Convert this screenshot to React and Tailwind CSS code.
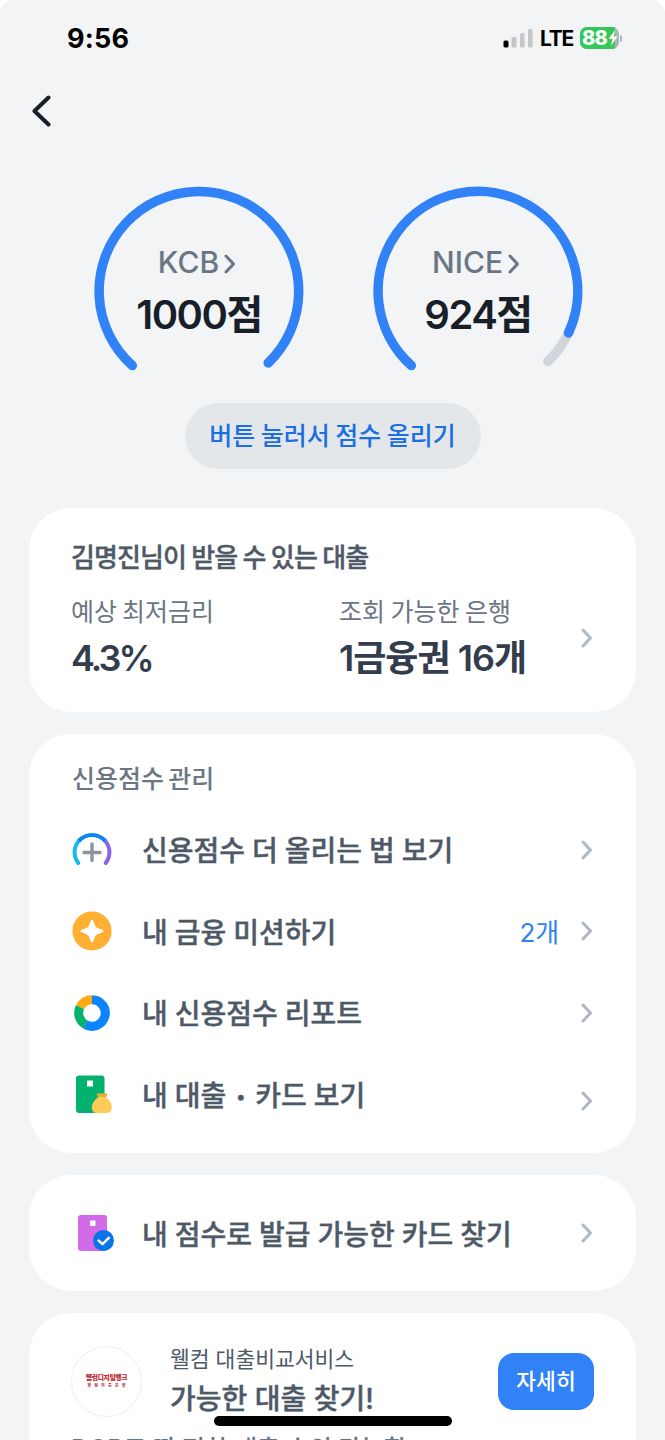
import React from 'react';

const ChevronRight = ({ className }) => (
  <svg viewBox="0 0 12 20" fill="none" stroke="currentColor" strokeLinecap="round" strokeLinejoin="round" className={className}>
    <path d="M2 2l7.5 8L2 18" strokeWidth="3" />
  </svg>
);

const StatusBar = () => (
  <div className="flex h-[76px] items-center justify-between pl-[67px] pr-[43px] text-black">
    <span className="text-[27px] font-bold leading-none tracking-[0.2px]">9:56</span>
    <div className="flex items-center">
      <svg viewBox="0 0 32 20" className="h-5 w-8">
        <rect x="0.5" y="12.5" width="5" height="7" rx="1.5" fill="#000" />
        <rect x="8.5" y="9" width="5" height="10.5" rx="1.5" fill="#c5c6c8" />
        <rect x="17" y="5" width="4.5" height="14.5" rx="1.5" fill="#c5c6c8" />
        <rect x="25" y="1" width="4.5" height="18.5" rx="1.5" fill="#c5c6c8" />
      </svg>
      <span className="ml-[5px] mr-px w-[33px] text-[21px] font-bold leading-none tracking-[-1.2px]">LTE</span>
      <div className="relative ml-1.5 flex h-[22px] w-[39px] items-center overflow-hidden rounded-[7px] bg-[#b1b2b5]">
        <div className="h-full w-[35px] bg-[#34c759]" />
        <span className="absolute left-[2px] text-[20px] font-extrabold leading-none tracking-[-0.8px] text-white">88</span>
        <svg viewBox="0 0 10 16" className="absolute left-[28px] top-[3px] h-4 w-2.5">
          <path d="M7 0L0.5 9H4.5L3 16L9.5 6.5H5.8Z" fill="#fff" />
        </svg>
      </div>
      <div className="ml-px h-[7px] w-[2px] rounded-r-full bg-[#b1b2b5]" />
    </div>
  </div>
);

const ScoreGauge = ({ label, score, children }) => (
  <div className="relative h-[210px] w-[210px]">
    <svg viewBox="0 0 210 210" fill="none" strokeWidth="9.5" strokeLinecap="round" className="absolute inset-0 h-full w-full">
      {children}
    </svg>
    <div className="relative flex flex-col items-center pt-[58px]">
      <div className="mr-1 flex h-9 items-center text-[#6b7684]">
        <span className="text-[30px] font-medium leading-none">{label}</span>
        <ChevronRight className="ml-[5px] mt-1 h-5 w-3" />
      </div>
      <div className="mt-[9px] h-[52px] text-[40px] font-semibold leading-[52px] tracking-[-1.5px] text-[#191f28]">{score}</div>
    </div>
  </div>
);

const MethodIcon = () => (
  <svg viewBox="0 0 40 40" fill="none" strokeWidth="4" strokeLinecap="round" className="h-10 w-10">
    <path d="M6.3 33A17.3 17.3 0 0 1 7.5 10.2" stroke="#15b9ee" />
    <path d="M32.5 10.2A17.3 17.3 0 0 1 33.7 33" stroke="#8b63ea" />
    <path d="M6.9 10.9A17.3 17.3 0 0 1 33.1 10.9" stroke="#0a86f2" strokeLinecap="butt" />
    <path d="M20 14V30.5M12 22.5H28" stroke="#8b95a1" strokeWidth="3.4" />
  </svg>
);

const MissionIcon = () => (
  <svg viewBox="0 0 40 40" className="h-10 w-10">
    <circle cx="20" cy="20" r="19.6" fill="#ffaf32" />
    <path d="M20 8.5Q21 8.5 21.5 10.2C23.3 16 24 16.7 29.8 18.5Q31.5 19 31.5 20T29.8 21.5C24 23.3 23.3 24 21.5 29.8Q21 31.5 20 31.5T18.5 29.8C16.7 24 16 23.3 10.2 21.5Q8.5 21 8.5 20T10.2 18.5C16 16.7 16.7 16 18.5 10.2Q19 8.5 20 8.5Z" fill="#fff" />
  </svg>
);

const ReportIcon = () => (
  <svg viewBox="0 0 40 40" fill="none" strokeWidth="9" className="h-10 w-10">
    <path d="M20 6.7A13.3 13.3 0 1 1 13.35 31.52" stroke="#0a84ff" />
    <path d="M13.35 31.52A13.3 13.3 0 0 1 8.15 13.96" stroke="#03b26c" />
    <path d="M8.15 13.96A13.3 13.3 0 0 1 20 6.7" stroke="#ffab0f" />
  </svg>
);

const LoanIcon = () => (
  <svg viewBox="0 0 40 40" className="h-10 w-10">
    <rect x="4" y="1.5" width="28.5" height="37.5" rx="3" fill="#03b26c" />
    <rect x="15" y="6.5" width="6" height="6" rx="0.5" fill="#fff" />
    <path d="M24.5 19.5H35.5L33.5 25H27Z" fill="#ebac2f" />
    <path d="M26.5 23H33.5C37 25.5 39.8 29 39.8 33.5Q39.5 39 34.5 39H25Q20 39 19.8 33.5C20 29 23 25.5 26.5 23Z" fill="#ffcb58" />
  </svg>
);

const CardCheckIcon = () => (
  <svg viewBox="0 0 40 40" className="h-10 w-10 overflow-visible">
    <rect x="6" y="2" width="29" height="36" rx="3" fill="#d36be8" />
    <rect x="18" y="7.5" width="5.5" height="5.5" rx="0.5" fill="#fff" />
    <circle cx="31.5" cy="27.5" r="10.5" fill="#0a75e8" />
    <path d="M26.5 27.5L30.5 31.2L36.8 24.8" fill="none" stroke="#fff" strokeWidth="2.4" strokeLinecap="round" strokeLinejoin="round" />
  </svg>
);

const menuItems = [
  { icon: MethodIcon, label: '신용점수 더 올리는 법 보기' },
  { icon: MissionIcon, label: '내 금융 미션하기', count: '2개' },
  { icon: ReportIcon, label: '내 신용점수 리포트' },
  { icon: LoanIcon, label: '내 대출 • 카드 보기', chevronClass: 'mt-[14px]' },
];

const MenuRow = ({ icon: Icon, label, count, chevronClass = '' }) => (
  <div className="flex h-[81.5px] items-center">
    <Icon />
    <span className="ml-[30px] mt-[3px] flex-1 text-[28px] font-medium leading-10 text-[#4e5968] [-webkit-text-stroke:0.4px] [word-spacing:-0.5px]">
      {label.split('•').map((part, i) => (
        <React.Fragment key={part}>
          {i > 0 && <span className="inline-block w-[15px] text-center text-[18px] leading-none [vertical-align:3px]">•</span>}
          {part}
        </React.Fragment>
      ))}
    </span>
    {count && <span className="mr-[22px] mt-[3px] text-[26px] leading-10 tracking-[-0.2px] text-[#3182f6]">{count}</span>}
    <ChevronRight className={`mr-px h-5 w-3 text-[#b0b8c1] ${chevronClass}`} />
  </div>
);

const App = () => {
  return (
    <div className="h-[1440px] w-[665px] overflow-hidden bg-white font-['Inter','Noto_Sans_CJK_KR',sans-serif]">
      <div className="relative h-full overflow-hidden rounded-t-[14px] bg-[#f2f4f6]">
        <StatusBar />

        <div className="flex h-[110px] items-start pl-8 pt-[19px]">
          <svg viewBox="0 0 20 32" fill="none" className="h-8 w-5">
            <path d="M16.5 2.5L2.5 16L16.5 29.5" stroke="#191f28" strokeWidth="4" strokeLinecap="round" strokeLinejoin="round" />
          </svg>
        </div>

        {/* Scores */}
        <div className="flex gap-[69px] pl-[94px]">
          <ScoreGauge label="KCB" score="1000점">
            <path d="M38.3 179.5A99.8 99.8 0 1 1 174.2 177" stroke="#3182f6" />
          </ScoreGauge>
          <ScoreGauge label="NICE" score="924점">
            <path d="M195.5 147A99.8 99.8 0 0 1 174.8 175.5" stroke="#d1d6db" />
            <path d="M38.3 179.5A99.8 99.8 0 1 1 195.5 147" stroke="#3182f6" />
          </ScoreGauge>
        </div>

        <div className="mt-[7px] flex justify-center">
          <button className="h-[66px] w-[296px] rounded-full bg-[#e4e7ea] pt-[2px] text-[25px] font-medium text-[#1b6fe0] [word-spacing:-1.2px]">
            버튼 눌러서 점수 올리기
          </button>
        </div>

        <main className="mt-[39px] flex flex-col gap-[22px] px-[29px]">
          {/* Available loans */}
          <section className="h-[204px] rounded-[42px] bg-white px-[42px] pt-[32px]">
            <h2 className="text-[26px] font-medium leading-9 tracking-[-0.9px] text-[#4e5968] [-webkit-text-stroke:0.4px] [word-spacing:-0.8px]">김명진님이 받을 수 있는 대출</h2>
            <div className="mt-4 flex">
              <div className="w-[267px]">
                <p className="text-[25px] leading-10 text-[#6b7684] [word-spacing:-2px]">예상 최저금리</p>
                <p className="mt-0.5 text-[36px] font-semibold leading-[48px] tracking-[-2.9px] text-[#333d4b]">4.3%</p>
              </div>
              <div className="flex-1 pl-px">
                <p className="text-[25px] leading-10 text-[#6b7684] [word-spacing:-1.5px]">조회 가능한 은행</p>
                <p className="mt-0.5 text-[36px] font-semibold leading-[48px] tracking-[-1px] text-[#333d4b]">1금융권 16개</p>
              </div>
              <ChevronRight className="mr-px mt-9 h-5 w-3 text-[#b0b8c1]" />
            </div>
          </section>

          <section className="h-[419px] rounded-[42px] bg-white pl-[43px] pr-[42px] pt-[27px]">
            <h2 className="text-[25px] font-medium leading-9 text-[#6b7684] [word-spacing:-2.5px]">신용점수 관리</h2>
            <div className="mt-[12px]">
              {menuItems.map((item) => (
                <MenuRow key={item.label} {...item} />
              ))}
            </div>
          </section>

          <section className="flex h-[116px] flex-col justify-center rounded-[42px] bg-white pl-[43px] pr-[42px]">
            <MenuRow icon={CardCheckIcon} label="내 점수로 발급 가능한 카드 찾기" />
          </section>

          {/* Promotion */}
          <section className="h-[200px] rounded-t-[42px] bg-white px-[42px] pt-[30px]">
            <div className="flex items-center">
              <div className="flex h-[71px] w-[71px] flex-col items-center justify-center rounded-full border border-[#eceef0]">
                <span className="whitespace-nowrap text-[6.8px] font-black leading-[8px] tracking-[-0.35px] text-[#bd2531]">웰컴디지털뱅크</span>
                <span className="mt-px whitespace-nowrap pl-[3px] text-[4px] font-bold leading-[5px] tracking-[3.2px] text-[#bd2531]">웰컴저축은행</span>
              </div>
              <div className="ml-7 flex-1">
                <p className="text-[21.5px] leading-8 text-[#4e5968]">웰컴 대출비교서비스</p>
                <p className="mt-1 text-[28px] font-medium leading-10 text-[#4e5968] [-webkit-text-stroke:0.4px]">가능한 대출 찾기!</p>
              </div>
              <button className="mt-px h-[57px] w-[96px] rounded-2xl bg-[#3182f6] text-[21.5px] font-medium text-white">자세히</button>
            </div>
            <p className="mt-[14px] whitespace-nowrap text-[25px] font-medium leading-8 tracking-[-0.2px] text-[#6b7684]">DGB로 딱 편한 대출 수의 가능함</p>
          </section>
        </main>

        {/* Home indicator */}
        <div className="absolute left-[214px] top-[1416px] h-[10px] w-[238px] rounded-full bg-black" />
      </div>
    </div>
  );
};

export default App;
